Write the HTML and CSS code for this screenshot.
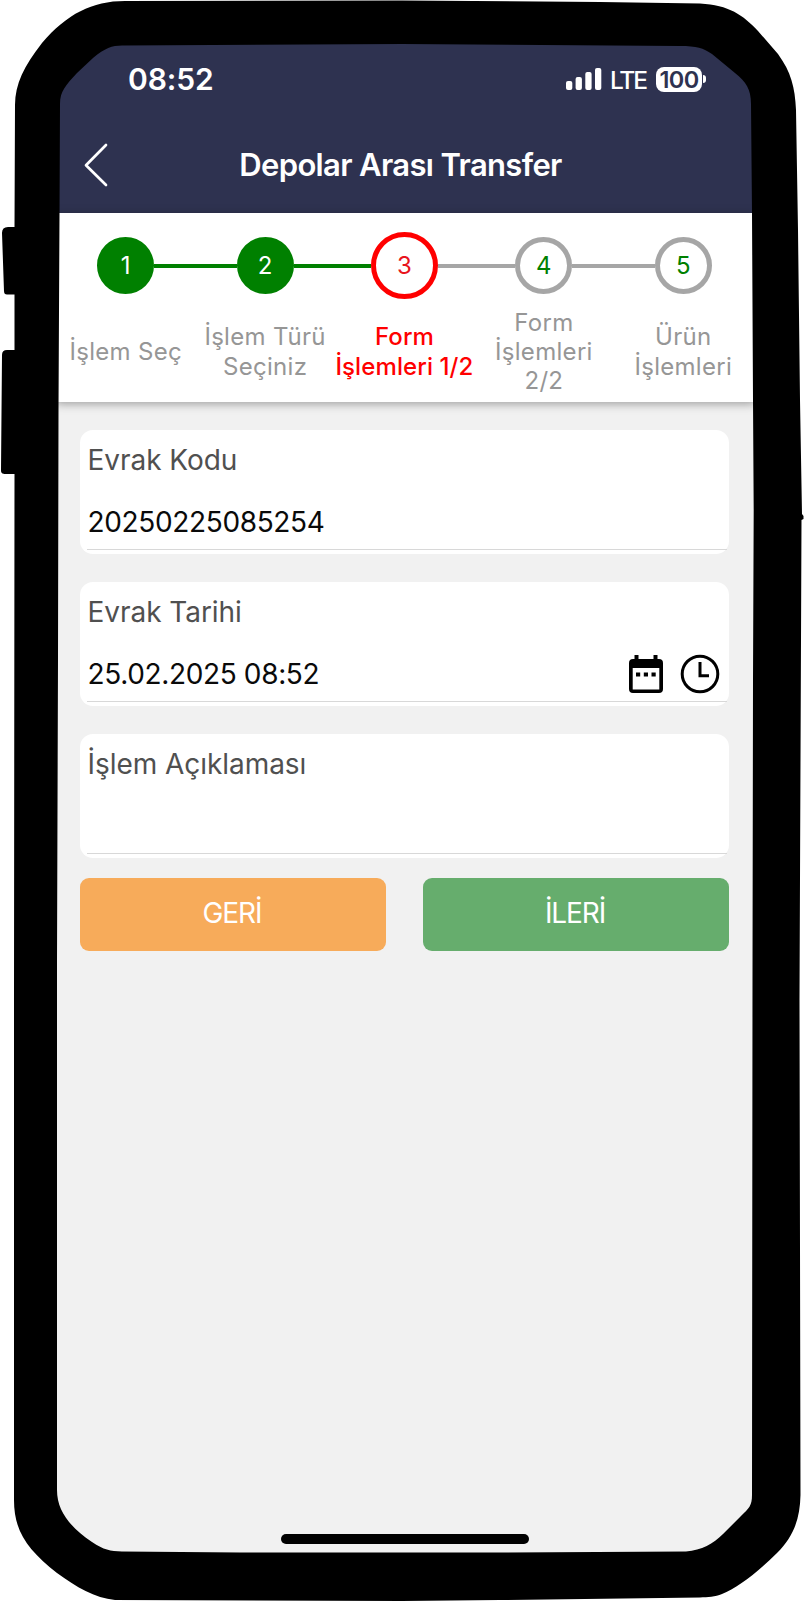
FILE: index.html
```html
<!DOCTYPE html>
<html lang="tr">
<head>
    <meta charset="UTF-8">
    <meta name="viewport" content="width=device-width, initial-scale=1.0">
    <title>Depolar Arası Transfer</title>
    <link rel="stylesheet" href="styles.css">
</head>
<body>
    <div class="phone">
        <div class="screen">
            <header class="header">
                <div class="status-bar">
                    <span class="time">08:52</span>
                    <div class="status-right">
                        <svg class="signal" width="36" height="22" viewBox="0 0 36 22" fill="#fff">
                            <rect x="0" y="13" width="6.3" height="9" rx="2"/>
                            <rect x="9.6" y="9" width="6.3" height="13" rx="2"/>
                            <rect x="19.3" y="4" width="6.3" height="18" rx="2"/>
                            <rect x="29" y="0" width="6.3" height="22" rx="2"/>
                        </svg>
                        <span class="network">LTE</span>
                        <span class="battery">100</span>
                        <span class="battery-tip"></span>
                    </div>
                </div>
                <div class="title-bar">
                    <svg class="back" width="26" height="44" viewBox="0 0 26 44" fill="none" stroke="#fff" stroke-width="2.7" stroke-linecap="round" stroke-linejoin="round">
                        <path d="M23 2L3 22.3L23 42"/>
                    </svg>
                    <h1 class="title">Depolar Arası Transfer</h1>
                </div>
            </header>

            <nav class="stepper">
                <div class="step done">
                    <div class="track"><span class="circle">1</span></div>
                    <div class="step-label">İşlem Seç</div>
                </div>
                <div class="step done">
                    <div class="track"><span class="circle">2</span></div>
                    <div class="step-label">İşlem Türü<br>Seçiniz</div>
                </div>
                <div class="step active">
                    <div class="track"><span class="circle">3</span></div>
                    <div class="step-label">Form<br>İşlemleri 1/2</div>
                </div>
                <div class="step">
                    <div class="track"><span class="circle">4</span></div>
                    <div class="step-label">Form<br>İşlemleri<br>2/2</div>
                </div>
                <div class="step">
                    <div class="track"><span class="circle">5</span></div>
                    <div class="step-label">Ürün<br>İşlemleri</div>
                </div>
            </nav>

            <main class="form">
                <div class="field">
                    <div class="field-label">Evrak Kodu</div>
                    <div class="field-row">
                        <span class="field-value">20250225085254</span>
                    </div>
                </div>
                <div class="field">
                    <div class="field-label">Evrak Tarihi</div>
                    <div class="field-row">
                        <span class="field-value">25.02.2025 08:52</span>
                        <div class="field-icons">
                            <svg width="34" height="38" viewBox="0 0 34 38">
                                <path fill-rule="evenodd" d="M5.500 0h4v4h15V0h4v4H30a4 4 0 0 1 4 4v26a4 4 0 0 1-4 4H4a4 4 0 0 1-4-4V8a4 4 0 0 1 4-4h1.500zM3.700 13v21.500h26.600V13z"/>
                                <path d="M7 17.500h4.200v4H7zM14.800 17.500H19v4h-4.200zM22.500 17.500h4.200v4h-4.200z"/>
                            </svg>
                            <svg width="40" height="40" viewBox="0 0 40 40" fill="none" stroke="#000" stroke-width="3">
                                <circle cx="20" cy="20" r="17.800"/>
                                <path d="M20 8v13.700h9"/>
                            </svg>
                        </div>
                    </div>
                </div>
                <div class="field">
                    <div class="field-label">İşlem Açıklaması</div>
                    <div class="field-row"></div>
                </div>
                <div class="actions">
                    <button class="btn btn-back">GERİ</button>
                    <button class="btn btn-next">İLERİ</button>
                </div>
            </main>

            <div class="home-bar"></div>
        </div>

        <!-- Phone body, lies over the screen edges -->
        <svg class="frame" width="804" height="1602" viewBox="0 0 804 1602">
            <path fill-rule="evenodd" d="M15 105C15 84 24 66 42 43C67 14 92 1 125 1L402 0.500L600 2L700 3.500C729 5 743 15 758 31L778 54C791 72 795 87 796 110L798 230L800 400L802 514L803.500 516V519L801.500 520L800.500 760L799.500 1000L800.500 1495C800 1520 793 1537 777 1553C757 1573 737 1588 722 1594C715 1597 708 1597 700 1597.500L500 1600L402 1601L115 1600C95 1598 76 1587 57 1573C28 1550 14 1532 14 1500V1000L14.500 474H6C2 474 1 473 1 470L2 355Q2 350 7 350H14.500V294.500H7Q4 294.500 4 291L2 233Q2 227 8 227H14.500Z
            M60 104C60 91 66 85 77 73L93 58C105 48 112 45.500 122 45.500L402 44L680 46C697 46 703 48 712 54L735 73C746 82 751 89 751 104L752 213L753 400L753.700 510L753 680L752.500 980L752 1495C752 1506 749 1508 741 1516L723 1534C713 1544 702 1550 686 1551.500L500 1552.500H240L122 1551.500C110 1551 104 1550 92 1542C70 1527 57 1511 57 1490V960L58 660L58.500 410L59.500 213Z"/>
        </svg>
    </div>
</body>
</html>
```

FILE: styles.css
```css
* {
    box-sizing: border-box;
}
body {
    margin: 0;
    background: #fff;
    font-family: Inter, "Liberation Sans", sans-serif;
}
.phone {
    position: relative;
    width: 804px;
    height: 1602px;
    padding: 40px 49px 46px 56px;
    overflow: hidden;
}
.frame {
    position: absolute;
    top: 0;
    left: 0;
    pointer-events: none;
}
.screen {
    display: flex;
    flex-direction: column;
    width: 699px;
    height: 1516px;
    background: #f1f1f1;
    /* keeps the square corners under the phone body */
    clip-path: inset(0 round 45px);
}

/* Header */
.header {
    height: 173px;
    background: #2e3250;
    color: #fff;
}
.status-bar {
    display: flex;
    justify-content: space-between;
    align-items: center;
    height: 78px;
    padding: 0 49px 0 72px;
}
.time {
    font-size: 30px;
    font-weight: 600;
    letter-spacing: -0.1px;
}
.status-right {
    display: flex;
    align-items: center;
}
.network {
    width: 36px;
    margin: 2px 10px 0 8px;
    font-size: 24.5px;
    font-weight: 500;
    letter-spacing: -2.2px;
    white-space: nowrap;
}
.battery {
    width: 46px;
    height: 25px;
    border-radius: 8px;
    background: #fff;
    color: #2e3250;
    font-size: 23.5px;
    font-weight: 600;
    line-height: 26px;
    text-align: center;
    letter-spacing: -0.6px;
}
.battery-tip {
    width: 3px;
    height: 8px;
    margin-left: 1px;
    border-radius: 0 4px 4px 0;
    background: #fff;
}
.title-bar {
    display: grid;
    grid-template-columns: 60px 1fr 60px;
    align-items: center;
    height: 94px;
}
.back {
    margin-left: 27px;
}
.title {
    margin: 0 0 2px -10px;
    font-size: 31px;
    font-weight: 600;
    text-align: center;
    letter-spacing: -0.65px;
    white-space: nowrap;
}

/* Stepper */
.stepper {
    position: relative;
    display: grid;
    grid-template-columns: repeat(5, 139.4px);
    height: 189px;
    padding-top: 19px;
    background: #fff;
    box-shadow: 0 2px 9px rgba(0, 0, 0, 0.35);
}
.track {
    display: grid;
    grid-template-columns: 1fr auto 1fr;
    align-items: center;
    height: 67px;
}
.track::before, .track::after {
    content: "";
    height: 4px;
    background: #a6a6a6;
}
.done .track::before, .done .track::after, .active .track::before {
    background: #008000;
}
.step:first-child .track::before, .step:last-child .track::after {
    background: none;
}
.circle {
    display: flex;
    justify-content: center;
    align-items: center;
    width: 57px;
    height: 57px;
    border: 5.5px solid #a6a6a6;
    border-radius: 50%;
    color: #008000;
    font-size: 24px;
}
.done .circle {
    border-color: #008000;
    background: #008000;
    color: #fff;
}
.active .circle {
    width: 67px;
    height: 67px;
    border-color: #f00;
    color: #e8141c;
}
.step-label {
    display: flex;
    justify-content: center;
    align-items: center;
    height: 103px;
    padding-top: 2px;
    color: #969696;
    font-size: 24px;
    line-height: 29.3px;
    text-align: center;
    letter-spacing: 0.3px;
    white-space: nowrap;
}
.active .step-label {
    color: #f00;
    font-weight: 500;
    letter-spacing: 0.1px;
}

/* Form */
.form {
    padding: 28px 26px 0 24px;
}
.field {
    height: 124px;
    margin-bottom: 28px;
    padding: 14px 2px 4px 7px;
    border-radius: 13px;
    background: #fff;
}
.field:nth-child(3) {
    margin-bottom: 20px;
}
.field-label {
    height: 32px;
    padding-left: 0.5px;
    color: #505050;
    font-size: 28px;
    line-height: 32px;
    letter-spacing: -0.05px;
}
.field-row {
    display: flex;
    justify-content: space-between;
    align-items: center;
    height: 74px;
    padding: 18px 7px 0 0.5px;
    border-bottom: 1.5px solid #d8d8d8;
}
.field-value {
    color: #0a0a0a;
    font-size: 28px;
    letter-spacing: -0.35px;
}
.field-icons {
    display: flex;
    align-items: center;
    gap: 17px;
}
.actions {
    display: grid;
    grid-template-columns: 1fr 1fr;
    gap: 37px;
}
.btn {
    height: 73px;
    padding: 0 8px 3px 6px;
    border: none;
    border-radius: 9px;
    color: #fff;
    font-family: inherit;
    font-size: 28px;
    letter-spacing: -1.1px;
}
.btn-back {
    background: #f7ab5a;
}
.btn-next {
    background: #66ad6d;
}

.home-bar {
    width: 248px;
    height: 10px;
    margin: auto auto 12px 225px;
    border-radius: 5px;
    background: #000;
}
```
